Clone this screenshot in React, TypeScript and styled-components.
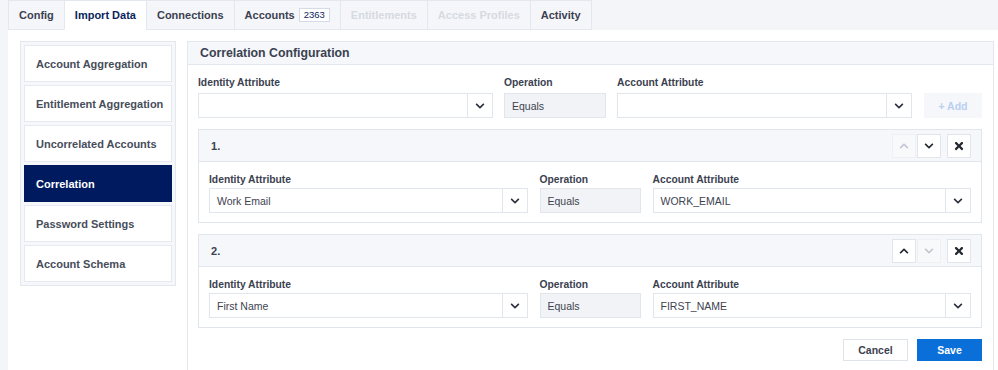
import styled, { createGlobalStyle } from 'styled-components';
import { FaChevronDown, FaChevronUp, FaTimes } from 'react-icons/fa';

const GlobalStyle = createGlobalStyle`
    body {
        margin: 0;
        background: #f3f5f8;
        font-family: "Liberation Sans", Arial, sans-serif;
        color: #3b4150;
    }
    * { box-sizing: border-box; }
`

const Page = styled.div`
    padding-left: 8px;
    height: 370px;
    display: flex;
    flex-direction: column;
`

const TabBar = styled.div`
    display: flex;
    height: 30px;
`

const Tab = styled.div<{ $active?: boolean; $disabled?: boolean }>`
    display: flex;
    align-items: center;
    gap: 4px;
    padding: 0 10px;
    margin-left: -1px;
    border: 1px solid #e3e7ee;
    border-bottom-color: ${p => (p.$active ? '#fff' : '#e3e7ee')};
    background: ${p => (p.$active ? '#fff' : '#f5f6f9')};
    color: ${p => (p.$active ? '#0b1f5c' : p.$disabled ? '#d6dae1' : '#3b4150')};
    font-size: 11px;
    font-weight: bold;
    &:first-child { margin-left: 0; }
`

const Badge = styled.span`
    border: 1px solid #d5dbe5;
    background: #fff;
    color: #0b1f5c;
    font-size: 9.5px;
    font-weight: normal;
    padding: 1px 4px;
    line-height: 10px;
`

const Content = styled.div`
    flex: 1;
    background: #fff;
    display: flex;
    gap: 11px;
    padding: 11px 4px 0 12px;
`

const Nav = styled.div`
    width: 156px;
    align-self: flex-start;
    border: 1px solid #e3e7ee;
    background: #f5f7fa;
    padding: 3px;
    display: flex;
    flex-direction: column;
    gap: 3px;
`

const NavItem = styled.div<{ $selected?: boolean }>`
    height: 37px;
    display: flex;
    align-items: center;
    padding-left: 11px;
    border: 1px solid ${p => (p.$selected ? '#001a5f' : '#e6e9ef')};
    background: ${p => (p.$selected ? '#001a5f' : '#fff')};
    color: ${p => (p.$selected ? '#fff' : '#474d5a')};
    font-size: 11px;
    font-weight: bold;
`

const Panel = styled.div`
    flex: 1;
    border: 1px solid #e3e7ee;
    border-bottom: none;
`

const PanelHeader = styled.div`
    height: 23px;
    display: flex;
    align-items: center;
    padding: 0 12px;
    background: #f5f7fa;
    border-bottom: 1px solid #e3e7ee;
    font-size: 12.3px;
    font-weight: bold;
    color: #3b4150;
`

const PanelBody = styled.div`
    padding: 11px 11px 0 10px;
`

const AddRow = styled.div`
    display: grid;
    grid-template-columns: 1fr 102px 1fr 59px;
    column-gap: 11px;
    align-items: end;
    margin-bottom: 11px;
`

const RuleRow = styled.div`
    display: grid;
    grid-template-columns: 1fr 101px 1fr;
    column-gap: 12px;
`

const Field = styled.div<{ $tight?: boolean }>`
    display: flex;
    flex-direction: column;
    gap: ${p => (p.$tight ? '2px' : '4px')};
`

const Label = styled.label`
    font-size: 10.3px;
    font-weight: bold;
    line-height: 13px;
    color: #3b4150;
`

const SelectBox = styled.div`
    height: 25px;
    display: flex;
    border: 1px solid #e1e5ec;
    background: #fff;
`

const SelectValue = styled.div`
    flex: 1;
    display: flex;
    align-items: center;
    padding-left: 7px;
    font-size: 10.5px;
    color: #3d4350;
`

const Caret = styled.div`
    width: 25px;
    display: flex;
    align-items: center;
    justify-content: center;
    border-left: 1px solid #e1e5ec;
    color: #2b303b;
`

const Operation = styled.div`
    height: 25px;
    display: flex;
    align-items: center;
    padding-left: 7px;
    border: 1px solid #e1e5ec;
    background: #f1f3f6;
    font-size: 10.5px;
    color: #3d4350;
`

const AddButton = styled.button`
    height: 25px;
    margin-left: 1px;
    border: none;
    background: #f5f7fa;
    color: #b9cff0;
    font-family: inherit;
    font-size: 10.5px;
    font-weight: bold;
`

const Card = styled.div`
    border: 1px solid #e1e5ec;
    margin-bottom: 11px;
`

const CardHeader = styled.div`
    height: 32px;
    display: flex;
    align-items: center;
    justify-content: space-between;
    padding: 0 10px 0 12px;
    background: #f5f7fa;
    border-bottom: 1px solid #e1e5ec;
    font-size: 11px;
    font-weight: bold;
    color: #3b4150;
`

const CardActions = styled.div`
    display: flex;
    gap: 1px;
`

const IconButton = styled.div<{ $disabled?: boolean; $gap?: boolean }>`
    width: 24px;
    height: 24px;
    display: flex;
    align-items: center;
    justify-content: center;
    margin-left: ${p => (p.$gap ? '5px' : '0')};
    border: 1px solid ${p => (p.$disabled ? '#edf0f4' : '#e1e5ec')};
    background: ${p => (p.$disabled ? '#f8f9fb' : '#fff')};
    color: ${p => (p.$disabled ? '#c3c8d0' : '#23272f')};
`

const CardBody = styled.div`
    padding: 11px 10px 9px;
`

const Footer = styled.div`
    display: flex;
    justify-content: flex-end;
    gap: 9px;
`

const Button = styled.button<{ $primary?: boolean }>`
    width: 65px;
    height: 22px;
    border: 1px solid ${p => (p.$primary ? '#0b6fda' : '#dfe3ea')};
    background: ${p => (p.$primary ? '#0b6fda' : '#fff')};
    color: ${p => (p.$primary ? '#fff' : '#3b4150')};
    font-family: inherit;
    font-size: 10.5px;
    font-weight: bold;
`

const Select = ({ value }: { value?: string }) => (
    <SelectBox>
        <SelectValue>{value}</SelectValue>
        <Caret><FaChevronDown size={10} /></Caret>
    </SelectBox>
)

const rules = [
    { identity: 'Work Email', account: 'WORK_EMAIL' },
    { identity: 'First Name', account: 'FIRST_NAME' },
]

const navItems = [
    'Account Aggregation',
    'Entitlement Aggregation',
    'Uncorrelated Accounts',
    'Correlation',
    'Password Settings',
    'Account Schema',
]

const App = () => {
    return (
        <Page>
            <GlobalStyle />
            <TabBar>
                <Tab>Config</Tab>
                <Tab $active>Import Data</Tab>
                <Tab>Connections</Tab>
                <Tab>Accounts <Badge>2363</Badge></Tab>
                <Tab $disabled>Entitlements</Tab>
                <Tab $disabled>Access Profiles</Tab>
                <Tab>Activity</Tab>
            </TabBar>
            <Content>
                <Nav>
                    {navItems.map(item => (
                        <NavItem key={item} $selected={item === 'Correlation'}>{item}</NavItem>
                    ))}
                </Nav>
                <Panel>
                    <PanelHeader>Correlation Configuration</PanelHeader>
                    <PanelBody>
                        <AddRow>
                            <Field>
                                <Label>Identity Attribute</Label>
                                <Select />
                            </Field>
                            <Field>
                                <Label>Operation</Label>
                                <Operation>Equals</Operation>
                            </Field>
                            <Field>
                                <Label>Account Attribute</Label>
                                <Select />
                            </Field>
                            <AddButton>+ Add</AddButton>
                        </AddRow>
                        {rules.map((rule, i) => (
                            <Card key={rule.account}>
                                <CardHeader>
                                    {i + 1}.
                                    <CardActions>
                                        <IconButton $disabled={i === 0}><FaChevronUp size={10} /></IconButton>
                                        <IconButton $disabled={i === rules.length - 1}><FaChevronDown size={10} /></IconButton>
                                        <IconButton $gap><FaTimes size={12} /></IconButton>
                                    </CardActions>
                                </CardHeader>
                                <CardBody>
                                    <RuleRow>
                                        <Field $tight>
                                            <Label>Identity Attribute</Label>
                                            <Select value={rule.identity} />
                                        </Field>
                                        <Field $tight>
                                            <Label>Operation</Label>
                                            <Operation>Equals</Operation>
                                        </Field>
                                        <Field $tight>
                                            <Label>Account Attribute</Label>
                                            <Select value={rule.account} />
                                        </Field>
                                    </RuleRow>
                                </CardBody>
                            </Card>
                        ))}
                        <Footer>
                            <Button>Cancel</Button>
                            <Button $primary>Save</Button>
                        </Footer>
                    </PanelBody>
                </Panel>
            </Content>
        </Page>
    )
}

export default App;
